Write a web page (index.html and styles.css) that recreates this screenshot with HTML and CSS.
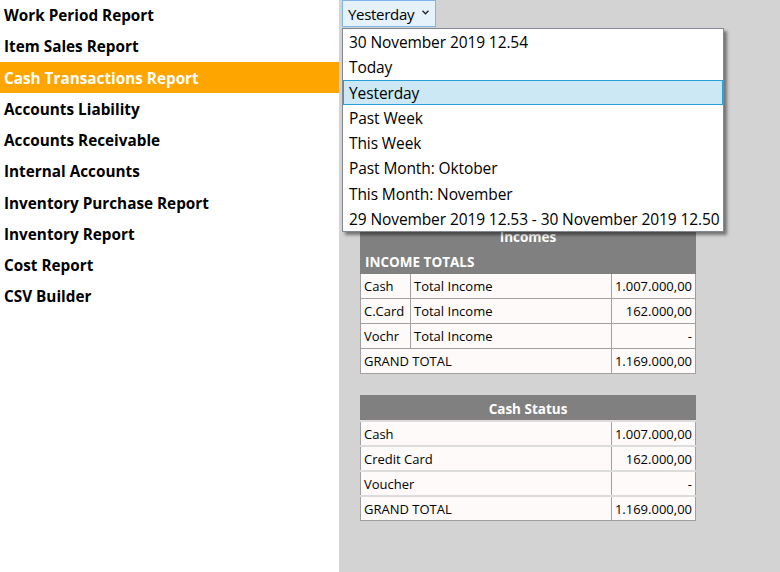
FILE: index.html
```html
<!DOCTYPE html>
<html>
<head>
<meta charset="utf-8">
<link rel="stylesheet" href="styles.css">
</head>
<body>
<div class="app">
  <nav class="sidebar">
    <div class="nav-item">Work Period Report</div>
    <div class="nav-item">Item Sales Report</div>
    <div class="nav-item active">Cash Transactions Report</div>
    <div class="nav-item">Accounts Liability</div>
    <div class="nav-item">Accounts Receivable</div>
    <div class="nav-item">Internal Accounts</div>
    <div class="nav-item">Inventory Purchase Report</div>
    <div class="nav-item">Inventory Report</div>
    <div class="nav-item">Cost Report</div>
    <div class="nav-item">CSV Builder</div>
  </nav>
  <main class="main">
    <div class="combo-wrap">
      <div class="combo">
        <span class="combo-text">Yesterday</span>
        <svg class="chev" width="7" height="5" viewBox="0 0 7 5"><polyline points="0.5,0.8 3.5,3.8 6.5,0.8" fill="none" stroke="#222" stroke-width="1.3"/></svg>
      </div>
      <ul class="dropdown">
        <li>30 November 2019 12.54</li>
        <li>Today</li>
        <li class="selected">Yesterday</li>
        <li>Past Week</li>
        <li>This Week</li>
        <li>Past Month: Oktober</li>
        <li>This Month: November</li>
        <li>29 November 2019 12.53 - 30 November 2019 12.50</li>
      </ul>
    </div>
    <div class="reports">
      <table class="rep">
        <tr><th colspan="3" class="title">Incomes</th></tr>
        <tr><th colspan="3" class="section">INCOME TOTALS</th></tr>
        <tr><td class="c1">Cash</td><td class="c2">Total Income</td><td class="num">1.007.000,00</td></tr>
        <tr><td class="c1">C.Card</td><td class="c2">Total Income</td><td class="num">162.000,00</td></tr>
        <tr><td class="c1">Vochr</td><td class="c2">Total Income</td><td class="num">-</td></tr>
        <tr><td colspan="2">GRAND TOTAL</td><td class="num">1.169.000,00</td></tr>
      </table>
      <table class="rep status">
        <tr><th colspan="2" class="title">Cash Status</th></tr>
        <tr><td class="lbl">Cash</td><td class="num">1.007.000,00</td></tr>
        <tr><td class="lbl">Credit Card</td><td class="num">162.000,00</td></tr>
        <tr><td class="lbl">Voucher</td><td class="num">-</td></tr>
        <tr><td class="lbl">GRAND TOTAL</td><td class="num">1.169.000,00</td></tr>
      </table>
    </div>
  </main>
</div>
</body>
</html>
```
FILE: styles.css
```css
html, body {
  margin: 0;
  padding: 0;
  height: 100%;
}
body {
  font-family: "Open Sans", "Noto Sans", sans-serif;
  color: #000;
}
.app {
  display: flex;
  height: 572px;
  overflow: hidden;
}
.sidebar {
  width: 339px;
  flex: none;
  background: #fff;
  margin-top: -1px;
}
.nav-item {
  height: 31.25px;
  line-height: 32.5px;
  padding-left: 4px;
  font-weight: 700;
  font-size: 15.3px;
  white-space: nowrap;
}
.nav-item.active {
  background: #ffa500;
  color: #fff;
}
.main {
  flex: 1;
  background: #d3d3d3;
  padding-left: 3px;
}
.combo-wrap {
  position: relative;
  height: 27px;
}
.combo {
  box-sizing: border-box;
  width: 94px;
  height: 27px;
  background: #e5f1fb;
  border: 1px solid #7eb4ea;
  display: flex;
  align-items: center;
  padding-left: 5px;
  font-size: 15px;
  letter-spacing: -0.3px;
}
.combo-text {
  flex: 1;
}
.chev {
  margin-right: 6px;
  margin-top: -2px;
}
.dropdown {
  position: absolute;
  left: 0;
  top: 28px;
  z-index: 5;
  box-sizing: border-box;
  width: 382px;
  margin: 0;
  padding: 0;
  list-style: none;
  background: #fff;
  border: 1px solid #828790;
  box-shadow: 3px 3px 3px rgba(0, 0, 0, 0.45);
}
.dropdown li {
  box-sizing: border-box;
  height: 25.3px;
  line-height: 23.3px;
  padding-top: 1px;
  padding-left: 5px;
  border: 1px solid transparent;
  font-size: 15.5px;
  letter-spacing: -0.1px;
  white-space: nowrap;
}
.dropdown li.selected {
  background: #cce8f5;
  border-color: #26a0da;
}
.reports {
  padding-left: 18px;
  padding-top: 196px;
  display: flex;
  flex-direction: column;
  gap: 21px;
}
.rep {
  width: 336px;
  border-collapse: collapse;
  background: #fdfaf9;
  font-size: 13px;
}
.rep th {
  background: #808080;
  color: #fff;
  font-weight: 700;
  height: 23px;
  padding: 1px 4px 0;
  border: 1px solid #808080;
}
.rep th.title {
  text-align: center;
  font-size: 13.5px;
}
.rep th.section {
  text-align: left;
  border-top: 1px solid #6f6f6f;
  font-size: 13.5px;
}
.rep td {
  height: 24px;
  padding: 0 3px 0 3px;
  border: 1px solid #a0a0a0;
  white-space: nowrap;
}
.rep td.c1 {
  width: 43px;
}
.rep td.num {
  text-align: right;
  width: 77px;
}
.status td {
  height: 23px;
  border-top: 2px solid #dcdcdc;
  border-bottom: 0;
}
.status td.lbl {
  border-right: 1px solid #a0a0a0;
}
.status tr:last-child td {
  border-bottom: 1px solid #a0a0a0;
}
```
